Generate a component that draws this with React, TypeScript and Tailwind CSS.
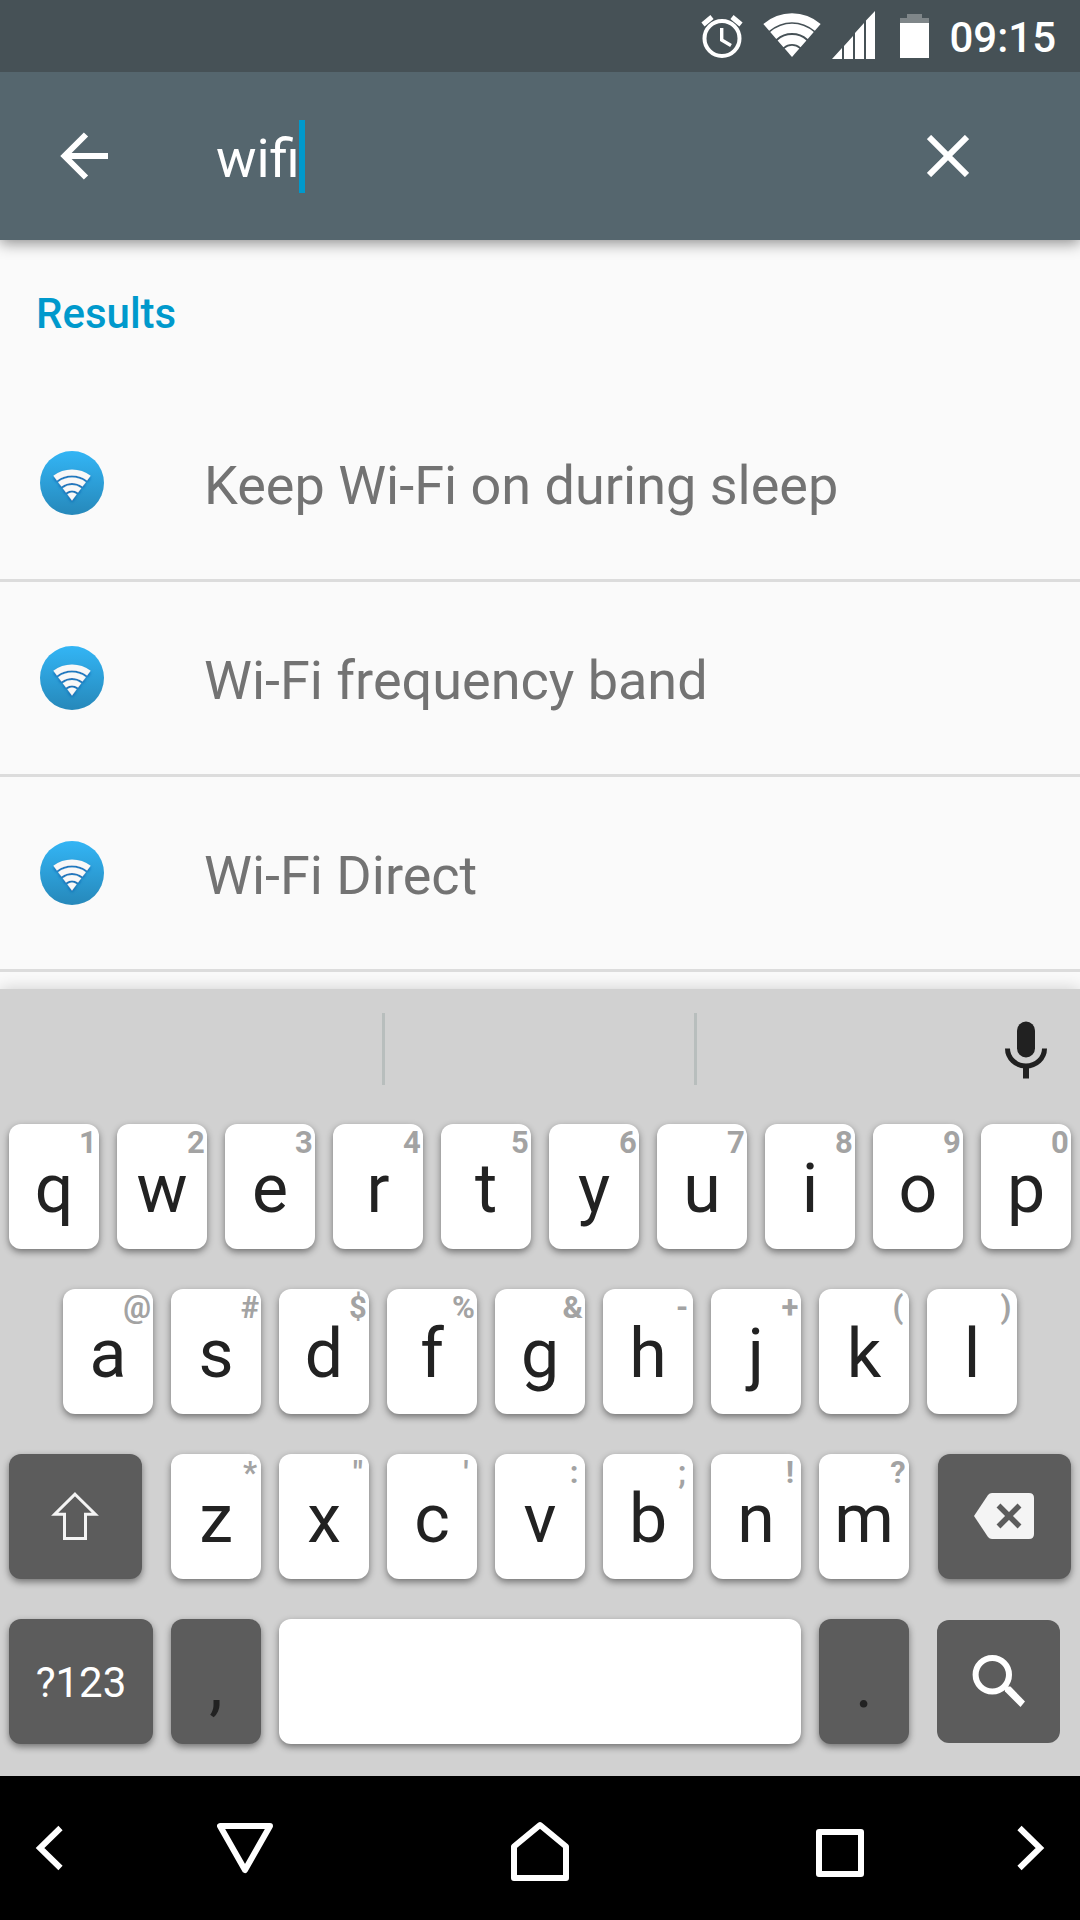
import { useState, type ReactNode } from "react";
import { clsx } from "clsx";

const results = ["Keep Wi-Fi on during sleep", "Wi-Fi frequency band", "Wi-Fi Direct"];

// [letter, long-press hint]
const topRow = [["q", "1"], ["w", "2"], ["e", "3"], ["r", "4"], ["t", "5"], ["y", "6"], ["u", "7"], ["i", "8"], ["o", "9"], ["p", "0"]];
const homeRow = [["a", "@"], ["s", "#"], ["d", "$"], ["f", "%"], ["g", "&"], ["h", "-"], ["j", "+"], ["k", "("], ["l", ")"]];
const bottomRow = [["z", "*"], ["x", '"'], ["c", "'"], ["v", ":"], ["b", ";"], ["n", "!"], ["m", "?"]];

// One arc of the wifi fan, between two radii around the apex
function band(cx: number, cy: number, outer: number, inner: number, angle: number) {
  const s = Math.sin((angle * Math.PI) / 180);
  const c = Math.cos((angle * Math.PI) / 180);
  return [
    `M${cx - outer * s} ${cy - outer * c}`,
    `A${outer} ${outer} 0 0 1 ${cx + outer * s} ${cy - outer * c}`,
    `L${cx + inner * s} ${cy - inner * c}`,
    inner > 0 ? `A${inner} ${inner} 0 0 0 ${cx - inner * s} ${cy - inner * c}` : "",
    "Z",
  ].join(" ");
}

function AlarmIcon() {
  return (
    <svg width="42" height="50" viewBox="0 0 42 50" fill="none" stroke="white">
      <circle cx="21" cy="27.5" r="17.5" strokeWidth="4" />
      <path d="M20.7 17v12l9.3 5.5" strokeWidth="3.4" />
      <path d="M2 13.5L11 6M40 13.5L31 6" strokeWidth="5" />
    </svg>
  );
}

function StatusWifiIcon() {
  const bands = [[43.7, 34.8], [33.2, 24], [22, 13], [11.2, 0]];
  return (
    <svg width="58" height="50" viewBox="0 0 58 50" fill="white">
      {bands.map(([o, i]) => (
        <path key={o} d={band(29, 46, o, i, 41)} />
      ))}
    </svg>
  );
}

function SignalIcon() {
  return (
    <svg width="43" height="50" viewBox="0 0 43 50" fill="white">
      <path d="M0 48L10 37V48Z M12 48V35L21 25V48Z M23 48V22L32 12V48Z M34 48V9.500L43 0V48Z" />
    </svg>
  );
}

function BatteryIcon() {
  return (
    <svg width="29" height="50" viewBox="0 0 29 50">
      <path d="M0 12V7H7V3H22V7H29V12Z" fill="#7f8689" />
      <path d="M0 12H29V47H0Z" fill="white" />
    </svg>
  );
}

function ResultIcon() {
  const bands = [[31, 25], [23, 17.4], [15.4, 10], [7.8, 0]];
  return (
    <svg width="64" height="64" viewBox="0 0 64 64" className="shrink-0">
      <defs>
        <linearGradient id="disc" x1="0" y1="0" x2="0" y2="1">
          <stop offset="0" stopColor="#33b5f5" />
          <stop offset="1" stopColor="#2688ba" />
        </linearGradient>
        <filter id="fan-shadow" x="-30%" y="-30%" width="160%" height="180%">
          <feDropShadow dx="0" dy="2" stdDeviation="1.8" floodColor="#0d5fae" floodOpacity="0.8" />
        </filter>
      </defs>
      <circle cx="32" cy="32" r="32" fill="url(#disc)" />
      <g fill="#f8f8f8" filter="url(#fan-shadow)">
        {bands.map(([o, i]) => (
          <path key={o} d={band(32, 49.5, o, i, 37)} />
        ))}
      </g>
    </svg>
  );
}

function Key({ children, label, hint, dark, flat, className }: {
  children?: ReactNode;
  label?: string;
  hint?: string;
  dark?: boolean;
  flat?: boolean;
  className?: string;
}) {
  return (
    <button
      type="button"
      aria-label={label}
      className={clsx(
        "relative flex items-center justify-center rounded-xl text-[68px] leading-none text-[#222222]",
        dark ? "bg-[#5c5c5c]" : "bg-white",
        flat ? "h-[123px]" : "h-[125px] shadow-[0_3px_7px_rgba(0,0,0,0.45)]",
        className
      )}
    >
      {children}
      {hint && (
        <span className="absolute top-[3px] right-0.5 min-w-[18px] text-center text-[31px] leading-[32px] font-bold text-[#a3a3a3]">
          {hint}
        </span>
      )}
    </button>
  );
}

function LetterKeys({ keys }: { keys: string[][] }) {
  return (
    <>
      {keys.map(([letter, hint]) => (
        <Key key={letter} hint={hint} className="min-w-0 flex-1 pt-1">
          {letter}
        </Key>
      ))}
    </>
  );
}

function StatusBar() {
  return (
    <div className="relative z-20 flex h-[72px] items-center justify-end bg-[#465156] pr-6">
      <AlarmIcon />
      <span className="ml-5"><StatusWifiIcon /></span>
      <span className="ml-[11px]"><SignalIcon /></span>
      <span className="ml-[25px]"><BatteryIcon /></span>
      <span className="ml-5 pt-1 text-[42px] leading-[48px] font-medium text-white">09:15</span>
    </div>
  );
}

function SearchHeader() {
  const [query, setQuery] = useState("wifi");

  return (
    <header className="relative z-10 flex h-[168px] items-center bg-[#55666e] pr-[111px] pl-[60px] shadow-[0_3px_14px_rgba(0,0,0,0.45)]">
      <button type="button" aria-label="Back">
        <svg width="48" height="48" viewBox="0 0 48 48" fill="none" stroke="white" strokeWidth="6">
          <path d="M26 2.500L4.500 24L26 45.500M5 24H48" />
        </svg>
      </button>
      <div className="ml-[108px] flex flex-1 items-center">
        <input
          type="text"
          aria-label="Search settings"
          value={query}
          onChange={(e) => setQuery(e.target.value)}
          className="field-sizing-content bg-transparent pt-1.5 text-[54px] leading-[64px] text-white caret-transparent outline-none"
        />
        <span className="-ml-px h-[73px] w-1.5 bg-[#0099cc]" />
      </div>
      <button type="button" aria-label="Clear" onClick={() => setQuery("")}>
        <svg width="42" height="42" viewBox="0 0 42 42" stroke="white" strokeWidth="6">
          <path d="M2 2L40 40M40 2L2 40" />
        </svg>
      </button>
    </header>
  );
}

function Keyboard() {
  return (
    <section aria-label="Keyboard" className="bg-[#d1d1d1] pb-8 shadow-[0_0_16px_rgba(0,0,0,0.18)]">
      <div className="grid h-[135px] grid-cols-[385fr_312fr_383fr] pt-6">
        <div className="h-[72px] border-r-[3px] border-[#b8bebd]" />
        <div className="h-[72px] border-r-[3px] border-[#b8bebd]" />
        <div className="flex h-[74px] items-center justify-end pr-[33px]">
          <button type="button" aria-label="Voice input">
            <svg width="42" height="58" viewBox="0 0 42 58" fill="none" stroke="#212121">
              <rect x="12" y="0.500" width="18" height="36" rx="9" fill="#212121" stroke="none" />
              <path d="M2.500 27.500a18.500 17.500 0 0 0 37 0" strokeWidth="5" />
              <path d="M21 46v11.500" strokeWidth="6" />
            </svg>
          </button>
        </div>
      </div>
      <div className="flex flex-col gap-10">
        <div className="flex gap-[18px] px-[9px]">
          <LetterKeys keys={topRow} />
        </div>
        <div className="flex gap-[18px] px-[63px]">
          <LetterKeys keys={homeRow} />
        </div>
        <div className="flex gap-[29px] px-[9px]">
          <Key dark label="Shift" className="w-[133px]">
            <svg width="49" height="49" viewBox="0 0 49 49" fill="none" stroke="#f4f4f4" strokeWidth="3">
              <path d="M24 2.200L44.300 22.300H34.500V46.500H13.500V22.300H3.700Z" />
            </svg>
          </Key>
          <div className="flex flex-1 gap-[18px]">
            <LetterKeys keys={bottomRow} />
          </div>
          <Key dark label="Delete" className="w-[133px]">
            <svg width="61" height="47" viewBox="0 0 61 47">
              <path d="M0 23L14 2Q15.500 0 18 0H55Q60 0 60 5V41Q60 46 55 46H18Q15.500 46 14 44Z" fill="#f4f4f4" />
              <path d="M24.500 12.500L45.500 33.500M45.500 12.500L24.500 33.500" stroke="#5c5c5c" strokeWidth="5.500" />
            </svg>
          </Key>
        </div>
        <div className="flex items-center gap-[18px] pr-5 pl-[9px]">
          <Key dark className="w-[144px]">
            <span className="pt-0.5 text-[42px] text-white">?123</span>
          </Key>
          <Key dark className="w-[90px] pt-1">,</Key>
          <Key label="Space" className="flex-1" />
          <Key dark className="w-[90px] pt-1">.</Key>
          <Key dark flat label="Search" className="ml-2.5 w-[123px]">
            <svg width="53" height="53" viewBox="0 0 53 53" fill="none" stroke="white">
              <circle cx="20.300" cy="19.700" r="16.700" strokeWidth="6" />
              <path d="M32.500 34L35 31.500H38.500L53 46.500L48.500 52L33 36.500Z" fill="white" stroke="none" />
            </svg>
          </Key>
        </div>
      </div>
    </section>
  );
}

function NavBar() {
  return (
    <nav className="grid h-36 grid-cols-[98fr_293fr_298fr_302fr_79fr] items-center justify-items-center bg-black pr-2.5">
      <button type="button" aria-label="Previous">
        <svg width="28" height="60" viewBox="0 0 28 60" fill="none" stroke="white" strokeWidth="6">
          <path d="M25.500 10L5 30L25.500 50" />
        </svg>
      </button>
      <button type="button" aria-label="Back">
        <svg width="56" height="60" viewBox="0 0 56 60" fill="none" stroke="white" strokeWidth="6" strokeLinejoin="round">
          <path d="M3 8H53L28 52Z" />
        </svg>
      </button>
      <button type="button" aria-label="Home">
        <svg width="58" height="72" viewBox="0 0 58 72" fill="none" stroke="white" strokeWidth="6" strokeLinejoin="round">
          <path d="M3 34.500L29 13L55 34.500V66H3Z" />
        </svg>
      </button>
      <button type="button" aria-label="Recent apps">
        <svg width="50" height="72" viewBox="0 0 50 72" fill="none" stroke="white" strokeWidth="6" strokeLinejoin="round">
          <path d="M4 20H46V62H4Z" />
        </svg>
      </button>
      <button type="button" aria-label="Next">
        <svg width="28" height="60" viewBox="0 0 28 60" fill="none" stroke="white" strokeWidth="6">
          <path d="M2.500 10L23 30L2.500 50" />
        </svg>
      </button>
    </nav>
  );
}

export default function App() {
  return (
    <div className="flex min-h-screen flex-col bg-[#fafafa] font-[Roboto,sans-serif]">
      <StatusBar />
      <SearchHeader />
      <main className="flex-1">
        <h2 className="h-[147px] px-9 pt-[50px] text-[42px] leading-[48px] font-medium text-[#0099cc]">Results</h2>
        <ul>
          {results.map((result) => (
            <li key={result} className="border-b-[3px] border-[#dcdcdc]">
              <a href="#" className="flex h-48 items-center pl-10">
                <ResultIcon />
                <span className="ml-[100px] pt-1.5 text-[54px] leading-[64px] text-[#737373]">{result}</span>
              </a>
            </li>
          ))}
        </ul>
      </main>
      <Keyboard />
      <NavBar />
    </div>
  );
}
